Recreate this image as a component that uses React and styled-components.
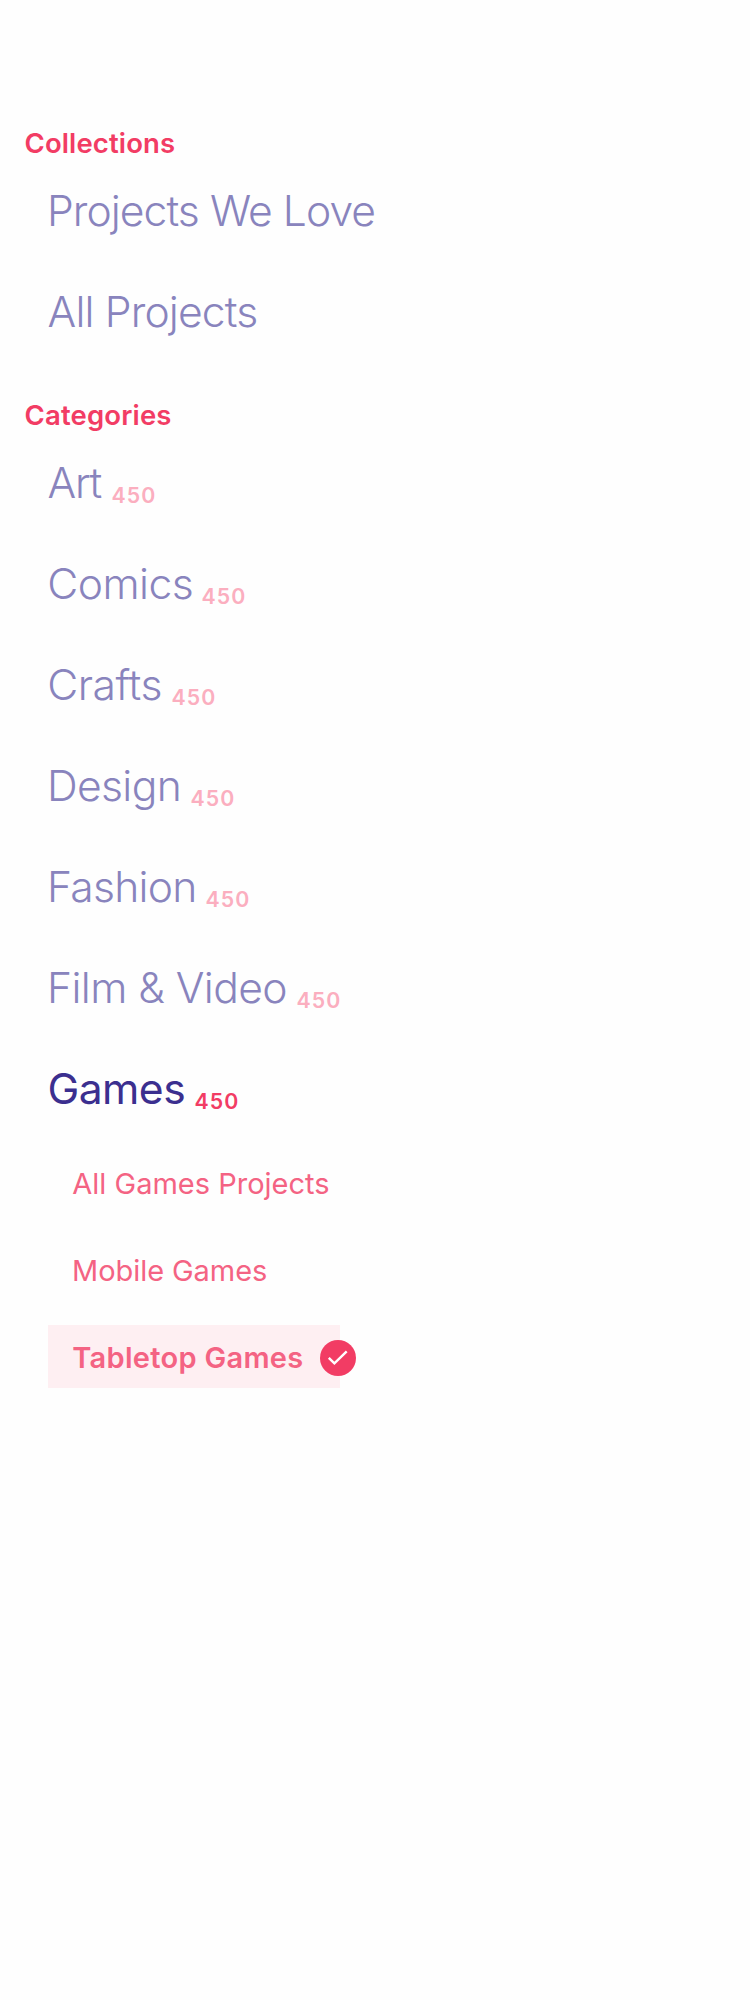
import React from 'react';
import styled, { createGlobalStyle } from 'styled-components';

const GlobalStyle = createGlobalStyle`
  * { box-sizing: border-box; }
  body {
    margin: 0;
    background: #fefefe;
    font-family: Inter, "Liberation Sans", sans-serif;
  }
`;

const Sidebar = styled.nav`
  display: flex;
  flex-direction: column;
  gap: 36px;
  min-height: 2000px;
  padding: 126px 24px 0;
`;

const Section = styled.section`
  display: flex;
  flex-direction: column;
`;

const Heading = styled.h2`
  margin: 0 0 0 0.5px;
  font-size: 27.5px;
  font-weight: 600;
  line-height: 34px;
  letter-spacing: ${(p) => p.$track}px;
  color: #f23c64;
`;

const List = styled.ul`
  display: flex;
  flex-direction: column;
  margin: 0;
  padding: 0 0 0 24px;
  list-style: none;
`;

const Item = styled.li`
  height: 101px;
  line-height: 101px;
  white-space: nowrap;
`;

const Label = styled.span`
  margin-left: ${(p) => p.$shift}px;
  font-size: 42.6px;
  font-weight: ${(p) => (p.$active ? 400 : 300)};
  letter-spacing: ${(p) => p.$track}px;
  color: ${(p) => (p.$active ? '#3b2f8f' : '#8984bd')};
`;

const Count = styled.span`
  margin-left: ${(p) => p.$gap}px;
  font-size: 21.3px;
  font-weight: 600;
  line-height: 1;
  letter-spacing: 1.1px;
  vertical-align: -5px;
  color: ${(p) => (p.$active ? '#f23c64' : '#fbaebf')};
`;

const SubList = styled.ul`
  display: flex;
  flex-direction: column;
  align-items: flex-start;
  gap: 24px;
  margin: 12px 0 0 24px;
  padding: 0;
  list-style: none;
`;

const SubItem = styled.li`
  display: flex;
  align-items: center;
  width: 292px;
  height: 63px;
  padding: 2px 0 0 24px;
  background: ${(p) => (p.$selected ? '#feeff2' : 'transparent')};
  font-size: 29px;
  font-weight: ${(p) => (p.$selected ? 600 : 400)};
  letter-spacing: ${(p) => p.$track}px;
  white-space: nowrap;
  color: #f46383;
`;

const SubLabel = styled.span`
  flex: none;
  width: 248px;
  text-indent: ${(p) => p.$shift}px;
`;

const Check = styled.svg`
  flex: none;
  width: 36px;
  height: 36px;
`;

const collections = [
  { name: 'Projects We Love', track: -0.93, shift: -1 },
  { name: 'All Projects', track: -0.84, shift: -0.4 },
];

const categories = [
  { name: 'Art', track: -1.4, shift: -0.4, gap: 10.8 },
  { name: 'Comics', track: -0.52, shift: -0.8, gap: 8.2 },
  { name: 'Crafts', track: -0.5, shift: -0.8, gap: 9.6 },
  { name: 'Design', track: -0.65, shift: -1, gap: 9.4 },
  { name: 'Fashion', track: -0.74, shift: -1, gap: 8.8 },
  { name: 'Film & Video', track: -0.57, shift: -1, gap: 9.4 },
  { name: 'Games', track: -0.55, shift: -0.5, gap: 9.4, active: true },
];

const games = [
  { name: 'All Games Projects', track: 0, shift: 0.3 },
  { name: 'Mobile Games', track: -0.07, shift: 0.1 },
  { name: 'Tabletop Games', track: 0.29, shift: 0.3, selected: true },
];

function Entry({ name, track, shift, gap, active }) {
  return (
    <Item>
      <Label $track={track} $shift={shift} $active={active}>{name}</Label>
      {gap && <Count $gap={gap} $active={active}>450</Count>}
    </Item>
  );
}

export default function App() {
  return (
    <>
      <GlobalStyle />
      <Sidebar>
        <Section>
          <Heading $track={0.13}>Collections</Heading>
          <List>{collections.map((c) => <Entry key={c.name} {...c} />)}</List>
        </Section>
        <Section>
          <Heading $track={0.17}>Categories</Heading>
          <List>{categories.map((c) => <Entry key={c.name} {...c} />)}</List>
          <SubList>
            {games.map((g) => (
              <SubItem key={g.name} $selected={g.selected} $track={g.track}>
                <SubLabel $shift={g.shift}>{g.name}</SubLabel>
                {g.selected && (
                  <Check viewBox="0 0 36 36" aria-hidden="true">
                    <circle cx="18" cy="18" r="18" fill="#f23c64" />
                    <path d="M8.8 17.8 14.4 23.4 26.7 11.4" fill="none" stroke="#fff" strokeWidth="2.4" />
                  </Check>
                )}
              </SubItem>
            ))}
          </SubList>
        </Section>
      </Sidebar>
    </>
  );
}
